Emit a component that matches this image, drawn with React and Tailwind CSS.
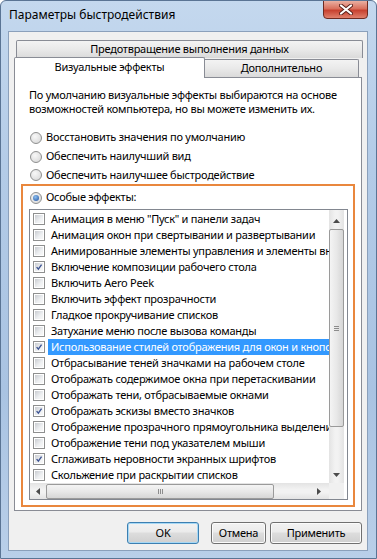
import React from 'react';

const effects = [
    ['Анимация в меню "Пуск" и панели задач', false],
    ['Анимация окон при свертывании и развертывании', false],
    ['Анимированные элементы управления и элементы внутри окна', false],
    ['Включение композиции рабочего стола', true],
    ['Включить Aero Peek', false],
    ['Включить эффект прозрачности', false],
    ['Гладкое прокручивание списков', false],
    ['Затухание меню после вызова команды', false],
    ['Использование стилей отображения для окон и кнопок', true],
    ['Отбрасывание теней значками на рабочем столе', false],
    ['Отображать содержимое окна при перетаскивании', false],
    ['Отображать тени, отбрасываемые окнами', false],
    ['Отображать эскизы вместо значков', true],
    ['Отображение прозрачного прямоугольника выделения', false],
    ['Отображение тени под указателем мыши', false],
    ['Сглаживать неровности экранных шрифтов', true],
    ['Скольжение при раскрытии списков', false],
];

function CheckBox({ checked }) {
    return (
        <div className="w-[12px] h-[12px] shrink-0 border border-[#8e8f8f] bg-white p-[1px]">
            <div className="w-full h-full bg-[linear-gradient(135deg,#c9ccd1,#eef0f2_60%,#f8f8f8)] relative">
                {checked && (
                    <svg viewBox="0 0 10 10" className="absolute inset-0 w-full h-full">
                        <path d="M2 5.2 L4.2 7.6 L8.2 2" fill="none" stroke="#3e5593" strokeWidth="1.7" />
                    </svg>
                )}
            </div>
        </div>
    );
}

function Radio({ checked }) {
    return (
        <div className="w-[12px] h-[12px] shrink-0 rounded-full border border-[#8e8f8f] bg-[radial-gradient(circle_at_40%_35%,#f8f8f8,#d4d4d4)] flex items-center justify-center">
            {checked && <div className="w-[6px] h-[6px] rounded-full bg-[radial-gradient(circle_at_40%_35%,#8cc0f0,#1f4f9e)]" />}
        </div>
    );
}

function RadioRow({ label, checked, h }) {
    return (
        <div className={`flex items-center ${h}`}>
            <Radio checked={checked} />
            <span className="ml-[4px]">{label}</span>
        </div>
    );
}

function Arrow({ dir }) {
    const paths = {
        up: 'M0 4 L3.5 0 L7 4 Z',
        down: 'M0 0 L3.5 4 L7 0 Z',
        left: 'M4 0 L0 3.5 L4 7 Z',
        right: 'M0 0 L4 3.5 L0 7 Z',
    };
    const vert = dir === 'up' || dir === 'down';
    return (
        <svg width={vert ? 7 : 4} height={vert ? 4 : 7} viewBox={vert ? '0 0 7 4' : '0 0 4 7'}>
            <path d={paths[dir]} fill="#4b4b4b" />
        </svg>
    );
}

function Button({ children, width, primary }) {
    return (
        <div className={`${width} h-[22px] rounded-[3px] border ${primary ? 'border-[#3c7fb1] shadow-[inset_0_0_0_1px_#a6d8f5]' : 'border-[#707070] shadow-[inset_0_0_0_1px_#fbfbfb]'} bg-[linear-gradient(#f2f2f2,#ebebeb_45%,#dddddd_50%,#cfcfcf)] flex items-center justify-center`}>
            {children}
        </div>
    );
}

export default function App() {
    return (
        <div className="w-[377px] h-[559px] flex flex-col bg-[linear-gradient(180deg,#c4d8ee,#b3cbe7_30%,#a9c3e2_70%,#b9cfe9)] border border-[#5a7494] rounded-t-[6px] font-['Noto_Sans',sans-serif] text-[11px] tracking-[-0.25px] text-black overflow-hidden">
            {/* title bar */}
            <div className="h-[30px] flex items-start shrink-0">
                <div className="pl-[8px] pt-[5px] text-[12px] tracking-normal text-black">Параметры быстродействия</div>
                <div className="ml-auto mr-[8px] -mt-px w-[45px] h-[19px] rounded-b-[4px] border border-[#6d2b22] bg-[linear-gradient(#eab0a2,#d9705d_45%,#c7412f_55%,#e0806c)] flex items-center justify-center">
                    <svg width="14" height="11" viewBox="0 0 14 11">
                        <path d="M2 1.5 L12 9.5 M12 1.5 L2 9.5" stroke="#5a2019" strokeWidth="4" strokeLinecap="round" />
                        <path d="M2 1.5 L12 9.5 M12 1.5 L2 9.5" stroke="#ffffff" strokeWidth="2.2" strokeLinecap="round" />
                    </svg>
                </div>
            </div>

            {/* client area */}
            <div className="ml-[7px] mr-[8px] mb-[7px] flex-1 flex flex-col bg-[#f0f0f0] border border-[#8ba0bb]">
                {/* tabs */}
                <div className="pt-[8px] px-[5px]">
                    <div className="ml-[2px] mr-[-1px] h-[18px] border border-[#898c95] border-b-0 rounded-t-[2px] bg-[linear-gradient(#f3f3f3,#e9e9e9_50%,#dadada)] flex items-center justify-center">
                        Предотвращение выполнения данных
                    </div>
                    <div className="flex items-end -mt-[2px] h-[21px]">
                        <div className="relative z-10 w-[191px] h-[21px] -mb-px bg-white border border-[#898c95] border-b-0 rounded-t-[2px] flex items-center justify-center pb-[2px]">
                            Визуальные эффекты
                        </div>
                        <div className="w-[154px] h-[18px] border border-l-0 border-b-0 border-[#898c95] rounded-tr-[2px] bg-[linear-gradient(#f3f3f3,#e9e9e9_50%,#dadada)] flex items-center justify-center">
                            Дополнительно
                        </div>
                    </div>

                    {/* tab panel */}
                    <div className="h-[434px] bg-white border border-[#898c95] flex flex-col">
                        <div className="pl-[14px] pt-[10px] leading-[14px]">
                            <div>По умолчанию визуальные эффекты выбираются на основе</div>
                            <div>возможностей компьютера, но вы можете изменить их.</div>
                        </div>
                        <div className="pl-[15px] mt-[12px]">
                            <RadioRow label="Восстановить значения по умолчанию" h="h-[19px]" />
                            <RadioRow label="Обеспечить наилучший вид" h="h-[19px]" />
                            <RadioRow label="Обеспечить наилучшее быстродействие" h="h-[18px]" />
                        </div>

                        {/* highlighted group */}
                        <div className="mx-[6px] border-2 border-[#e9873d] pl-[6px] pr-[5px] pt-[2px] pb-[5px]">
                            <div className="pl-px">
                                <RadioRow label="Особые эффекты:" checked h="h-[19px]" />
                            </div>
                            <div className="mt-[2px] h-[291px] border border-[#828790] bg-white flex flex-col">
                                <div className="flex h-[273px]">
                                    <div className="w-[299px] pt-px overflow-hidden">
                                        {effects.map(([label, checked], index) => (
                                            <div key={index} className="h-[16px] flex items-center whitespace-nowrap">
                                                <div className="ml-[3px]">
                                                    <CheckBox checked={checked} />
                                                </div>
                                                <span className={`ml-[3px] pl-[3px] h-[16px] flex items-center ${index === 8 ? 'flex-1 bg-[#3399ff] text-white' : ''}`}>{label}</span>
                                            </div>
                                        ))}
                                    </div>
                                    {/* vertical scrollbar */}
                                    <div className="w-[15px] bg-[linear-gradient(90deg,#e3e3e3,#f2f2f2_40%,#f2f2f2_60%,#e3e3e3)] flex flex-col items-center">
                                        <div className="h-[18px] flex items-center justify-center pt-[3px]">
                                            <Arrow dir="up" />
                                        </div>
                                        <div className="mt-[1px] w-[15px] h-[198px] rounded-[2px] border border-[#9a9a9a] bg-[linear-gradient(90deg,#f4f4f4,#e8e8e8_50%,#d6d6d6)] flex items-center justify-center">
                                            <div className="flex flex-col gap-[1px]">
                                                <div className="w-[5px] h-px bg-[#8c8c8c]" />
                                                <div className="w-[5px] h-px bg-[#8c8c8c]" />
                                                <div className="w-[5px] h-px bg-[#8c8c8c]" />
                                            </div>
                                        </div>
                                        <div className="flex-1 flex items-end justify-center pb-[6px]">
                                            <Arrow dir="down" />
                                        </div>
                                    </div>
                                </div>
                                {/* horizontal scrollbar */}
                                <div className="flex h-[16px]">
                                    <div className="w-[299px] bg-[linear-gradient(#e3e3e3,#f2f2f2_40%,#f2f2f2_60%,#e3e3e3)] flex items-center">
                                        <div className="w-[16px] flex justify-center">
                                            <Arrow dir="left" />
                                        </div>
                                        <div className="w-[228px] h-[15px] rounded-[2px] border border-[#9a9a9a] bg-[linear-gradient(#f4f4f4,#e8e8e8_50%,#d6d6d6)] flex items-center justify-center">
                                            <div className="flex gap-[1px]">
                                                <div className="w-px h-[5px] bg-[#8c8c8c]" />
                                                <div className="w-px h-[5px] bg-[#8c8c8c]" />
                                                <div className="w-px h-[5px] bg-[#8c8c8c]" />
                                            </div>
                                        </div>
                                        <div className="flex-1 flex justify-end pr-[8px]">
                                            <Arrow dir="right" />
                                        </div>
                                    </div>
                                    <div className="w-[15px] bg-[#f0f0f0]" />
                                </div>
                            </div>
                        </div>
                    </div>
                </div>

                {/* buttons */}
                <div className="mt-[11px] flex justify-end pr-[5px]">
                    <Button width="w-[72px]" primary>OK</Button>
                    <div className="ml-[12px]">
                        <Button width="w-[55px]">Отмена</Button>
                    </div>
                    <div className="ml-[4px]">
                        <Button width="w-[92px]">Применить</Button>
                    </div>
                </div>
            </div>
        </div>
    );
}
